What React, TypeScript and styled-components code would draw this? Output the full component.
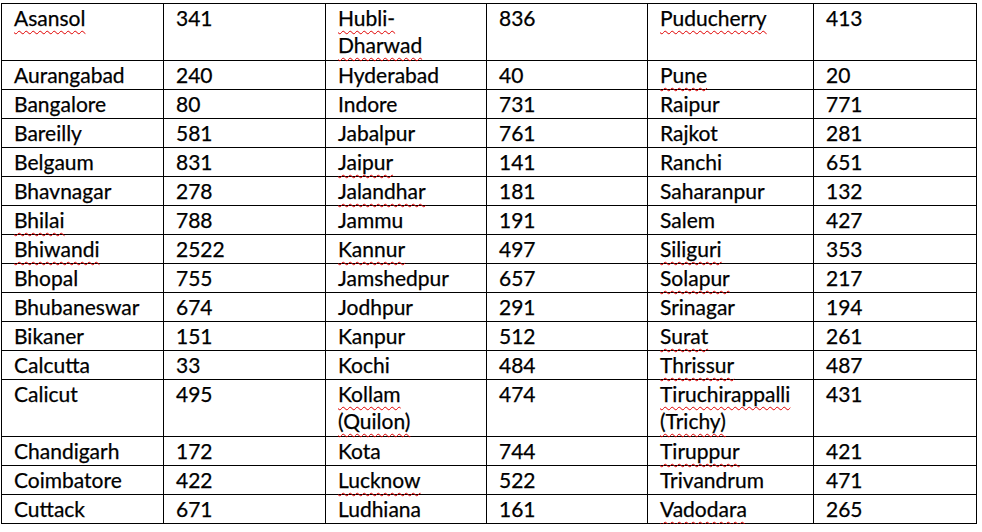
import styled, { createGlobalStyle } from 'styled-components';

const GlobalStyle = createGlobalStyle`
  html, body {
    margin: 0;
    padding: 0;
    background: #ffffff;
  }
`;

const Page = styled.div`
  padding: 3px 0 0 1px;
  font-family: Lato, "Open Sans", sans-serif;
`;

const Table = styled.table`
  border-collapse: collapse;
  table-layout: fixed;
  width: 975px;
`;

const Row = styled.tr<{ $tall?: boolean }>`
  height: ${(p) => (p.$tall ? 57 : 29)}px;
`;

const Cell = styled.td`
  border: 1px solid #000;
  padding: 0 4px 0 12px;
  vertical-align: top;
  font-size: 21px;
  line-height: 27px;
  color: #000;
  -webkit-text-stroke: 0.25px #000;
  white-space: nowrap;
`;

const Word = styled.span<{ $wrong?: boolean }>`
  display: block;
  ${(p) =>
    p.$wrong &&
    `
    text-decoration: underline wavy #e00000;
    text-decoration-thickness: 1px;
    text-underline-offset: 4px;
    text-decoration-skip-ink: none;
  `}
`;

type City = { lines: string[]; value: number; wrong?: boolean };

const c = (name: string, value: number, wrong = false): City => ({
  lines: name.split('|'),
  value,
  wrong,
});

const rows: City[][] = [
  [c('Asansol', 341, true), c('Hubli-|Dharwad', 836, true), c('Puducherry', 413, true)],
  [c('Aurangabad', 240), c('Hyderabad', 40), c('Pune', 20, true)],
  [c('Bangalore', 80), c('Indore', 731), c('Raipur', 771)],
  [c('Bareilly', 581), c('Jabalpur', 761), c('Rajkot', 281)],
  [c('Belgaum', 831), c('Jaipur', 141, true), c('Ranchi', 651)],
  [c('Bhavnagar', 278), c('Jalandhar', 181, true), c('Saharanpur', 132)],
  [c('Bhilai', 788, true), c('Jammu', 191), c('Salem', 427)],
  [c('Bhiwandi', 2522, true), c('Kannur', 497, true), c('Siliguri', 353, true)],
  [c('Bhopal', 755), c('Jamshedpur', 657), c('Solapur', 217, true)],
  [c('Bhubaneswar', 674), c('Jodhpur', 291), c('Srinagar', 194)],
  [c('Bikaner', 151), c('Kanpur', 512), c('Surat', 261, true)],
  [c('Calcutta', 33), c('Kochi', 484), c('Thrissur', 487, true)],
  [c('Calicut', 495), c('Kollam|(Quilon)', 474, true), c('Tiruchirappalli|(Trichy)', 431, true)],
  [c('Chandigarh', 172), c('Kota', 744), c('Tiruppur', 421, true)],
  [c('Coimbatore', 422), c('Lucknow', 522, true), c('Trivandrum', 471)],
  [c('Cuttack', 671), c('Ludhiana', 161), c('Vadodara', 265, true)],
];

const widths = [162, 162, 161, 161, 166, 163];

export default function App() {
  return (
    <Page>
      <GlobalStyle />
      <Table>
        <colgroup>
          {widths.map((w, i) => (
            <col key={i} style={{ width: w }} />
          ))}
        </colgroup>
        <tbody>
          {rows.map((row, r) => (
            <Row key={r} $tall={row.some((city) => city.lines.length > 1)}>
              {row.map((city, i) => [
                <Cell key={`n${i}`}>
                  {city.lines.map((line) => (
                    <Word key={line} $wrong={city.wrong}>
                      {line}
                    </Word>
                  ))}
                </Cell>,
                <Cell key={`v${i}`}>{city.value}</Cell>,
              ])}
            </Row>
          ))}
        </tbody>
      </Table>
    </Page>
  );
}
